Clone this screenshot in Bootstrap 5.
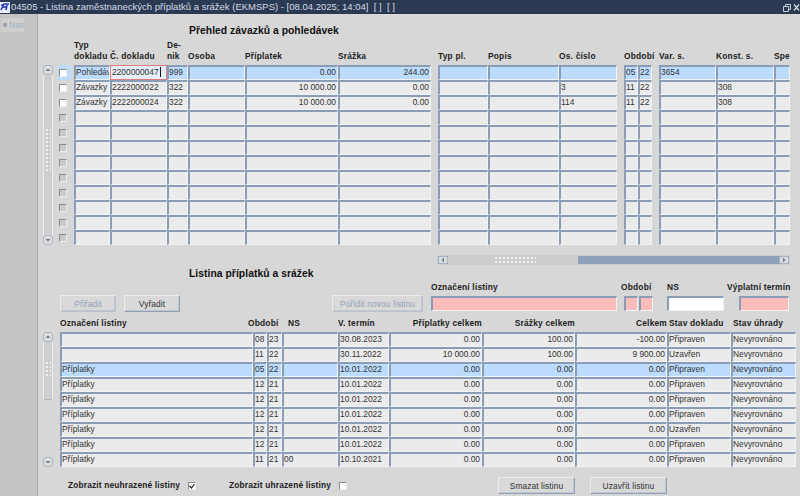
<!DOCTYPE html>
<html lang="cs">
<head>
<meta charset="utf-8">
<title>Listina příplatků a srážek</title>
<link href="https://cdn.jsdelivr.net/npm/bootstrap@5.3.0/dist/css/bootstrap.min.css" rel="stylesheet">
<style>
html,body{width:800px;height:496px;overflow:hidden;margin:0;background:#d7d7d7}
body{font-family:"Liberation Sans",Arial,sans-serif;font-size:8.4px;color:#222}
.ttl{height:14px;background:#2a3a52;color:#d5dbe4;font-size:9.5px;line-height:14px;white-space:pre}
.ttl svg{flex:none}
.ttlt{margin-left:1px}
.side{width:38px;height:482px;background:#c5c5c5;border-right:1px solid #a9aeb5;padding-top:4px}
.navb{width:23px;height:14px;margin-left:1px;background:#cfcfcf;color:#9dafc5;font-size:8.4px;line-height:14px;padding-left:1px;gap:1px}
.work{width:762px;height:482px;padding:10px 0 0 5px;background:#d7d7d7}
.h1a{font-size:10.3px;font-weight:700;line-height:14px;color:#111;margin-left:146px;letter-spacing:.06px}
.h1b{margin-top:2px}
.trow,.brow{display:grid;height:15px}
.trow{grid-template-columns:16px 36px 57px 21px 57px 93px 93px 57px 71px 58px 21px 14px 64px 58px 16px}
.brow{grid-template-columns:193px 14px 15px 56px 51px 93px 93px 92px 64px 65px}
.trow>:nth-child(8),.trow>:nth-child(11),.trow>:nth-child(13){margin-left:7px}
.hdr{height:25px;padding-bottom:3px;align-items:end;font-weight:700;line-height:11px;letter-spacing:.2px;color:#222}
.hdr>span{white-space:nowrap}
.htop{margin:2px 0 0 15px}
.hbot{height:15px;padding-bottom:3px;margin:5px 0 0 17px}
.hbot>.ob{margin-left:-5px}
.hbot>.pad6{padding-left:6px}
.hbot>.pad2{padding-left:2px}
.fld{display:block;height:15px;background:#ebebeb;border-style:solid;border-width:2px 1px 1px 2px;border-color:#8a9cb6 #f3f3f3 #f3f3f3 #8a9cb6;padding:0 1px 0 0;line-height:11px;white-space:nowrap;overflow:hidden;color:#333}
.sel{background:#bcdcfd}
.foc{background:#e6eff8;border:1px solid #e27b7b;line-height:13px;padding-left:1px}
.caret{display:inline-block;width:1px;height:10px;background:#111;vertical-align:-2px;margin-left:1px}
.pink{background:#fdbcbc}
.wh{background:#fff}
.chk{display:flex;align-items:center;padding-left:1px}
.chk.sel2{background:linear-gradient(90deg,#bcdcfd 13px,transparent 13px)}
.cb{display:block;width:8px;height:8px;background:#c9c9c9;border:1px solid;border-color:#8c8c8c #eee #eee #8c8c8c}
.cb.on{background:#fff}
.vs{width:10px;flex:none;margin-right:5px}
.vs1{height:180px}
.vs2{height:135px;margin-right:7px}
.sb{display:block;width:10px;height:10px;border:1px solid #aab5c4;border-radius:3px;background:#dcdcdc}
.sb svg{display:block}
.trk{display:block;background-color:#cfcfcf;border-left:1px solid #ececec;border-right:1px solid #ececec}
.t2{height:58px;border-bottom:1px solid #aab5c4;border-radius:0 0 2px 2px}
.dots{display:block;height:16px;margin:19px 1px 0;background-image:radial-gradient(circle,#f2f2f2 .7px,transparent 1px);background-size:4px 4px}
.dots1{height:44px;margin-top:53px}
.hs{height:10px;width:353px;margin:10px 0 0 394px;background:#8ea1ba;border:1px solid #c9ced6;display:flex}
.hs b{display:block;flex:none}
.hsb{width:10px;background:#dcdcdc;border:1px solid #aab5c4;border-radius:2px}
.hst{width:130px;background-color:#cdcdcd}
.hst i{display:block;height:8px;width:42px;margin-left:46px;background-image:radial-gradient(circle,#f2f2f2 .7px,transparent 1px);background-size:4px 4px}
.hsm{flex:1 1 auto}
.fgrid{display:grid;grid-template-columns:56px 8px 56px 152px 91px 8px 186px 7px 14px 1px 14px 14px 57px 15px 50px;grid-template-rows:14px 17px;margin-left:17px;height:31px}
.fl{font-weight:700;letter-spacing:.2px;line-height:12px;white-space:nowrap;color:#222}
.flob{margin-left:-3px;grid-column:span 3}
.flvt{margin-left:-12px}
.fgrid .fld{margin-top:1px}
.bt{--bs-btn-padding-y:0;--bs-btn-padding-x:0;--bs-btn-font-size:8.4px;--bs-btn-border-radius:1px;--bs-btn-line-height:14px;--bs-btn-color:#333;--bs-btn-bg:#d9d9d9;--bs-btn-border-width:0;--bs-btn-hover-bg:#d9d9d9;height:17px;display:block;background:#d9d9d9;color:#333;border:1px solid;border-color:#ececec #8fa0b6 #8fa0b6 #ececec;box-shadow:inset -1px -1px 0 #c2c7cf;letter-spacing:.1px}
.bt:disabled{color:#93a2b6;opacity:1;background:#d9d9d9;border-color:#ececec #b9c1cd #b9c1cd #ececec}
.foot{height:17px;margin-top:10px;font-weight:700;letter-spacing:.15px;color:#222;margin-left:25px}
.foot .bt{font-weight:400;width:77px}
.s1{margin-left:8px}
.z2{margin-left:33px}
.bsm{margin-left:151px}
.buz{margin-left:15px}
.ck{display:block;width:8px;height:8px;background:#fff;border:1px solid;border-color:#8c8c8c #eee #eee #8c8c8c}
</style>
</head>
<body>
<div class="ttl d-flex align-items-center">
  <svg width="10" height="11" viewBox="0 0 10 11"><rect width="10" height="11" fill="#e8eefc"/><path d="M1 8 4 2h5M3 5h4M1 3h2M6 8l1-5" stroke="#2338b8" stroke-width="1.6" fill="none"/></svg>
  <span class="ttlt flex-grow-1">04505 - Listina zaměstnaneckých příplatků a srážek (EKMSPS) - [08.04.2025; 14:04]  [ ]  [ ]</span>
  <svg width="17" height="9" viewBox="0 0 17 9"><path d="M.5 3.500h5v5h-5zM2.500 3V1.500h5v5H6" stroke="#c8d0da" fill="none"/><path d="M11 1.500l5 6M16 1.500l-5 6" stroke="#d9dfe7" stroke-width="1.200"/></svg>
</div>
<div class="d-flex">
  <div class="side">
    <div class="navb d-flex align-items-center"><svg width="7" height="8" viewBox="0 0 7 8"><circle cx="3.500" cy="4" r="2.500" fill="#9aa2ac"/></svg>Nav</div>
  </div>
  <div class="work">
    <div class="h1a">Přehled závazků a pohledávek</div>
    <div class="trow hdr htop">
      <span></span><span>Typ<br>dokladu</span><span>Č. dokladu</span><span>De-<br>nik</span><span>Osoba</span><span>Příplatek</span><span>Srážka</span><span>Typ pl.</span><span>Popis</span><span>Os. číslo</span><span>Období</span><span></span><span>Var. s.</span><span>Konst. s.</span><span>Spe</span>
    </div>
    <div class="d-flex">
      <div class="vs vs1 d-flex flex-column">
        <span class="sb"><svg width="8" height="8" viewBox="0 0 8 8"><path d="M1.500 5h5L4 2.500z" fill="#6d7c90"/></svg></span>
        <span class="trk flex-grow-1"><span class="dots dots1"></span></span>
        <span class="sb"><svg width="8" height="8" viewBox="0 0 8 8"><path d="M1.500 3h5L4 5.500z" fill="#6d7c90"/></svg></span>
      </div>
      <div>
        <div class="trow"><span class="chk sel2"><span class="cb on"></span></span><span class="fld sel">Pohledávky</span><span class="fld foc">2200000047<span class="caret"></span></span><span class="fld sel">999</span><span class="fld sel"></span><span class="fld sel text-end">0.00</span><span class="fld sel text-end">244.00</span><span class="fld sel"></span><span class="fld sel"></span><span class="fld sel"></span><span class="fld sel">05</span><span class="fld sel">22</span><span class="fld sel">3654</span><span class="fld sel"></span><span class="fld sel"></span></div>
        <div class="trow"><span class="chk"><span class="cb on"></span></span><span class="fld">Závazky</span><span class="fld">2222000022</span><span class="fld">322</span><span class="fld"></span><span class="fld text-end">10 000.00</span><span class="fld text-end">0.00</span><span class="fld"></span><span class="fld"></span><span class="fld">3</span><span class="fld">11</span><span class="fld">22</span><span class="fld"></span><span class="fld">308</span><span class="fld"></span></div>
        <div class="trow"><span class="chk"><span class="cb on"></span></span><span class="fld">Závazky</span><span class="fld">2222000024</span><span class="fld">322</span><span class="fld"></span><span class="fld text-end">10 000.00</span><span class="fld text-end">0.00</span><span class="fld"></span><span class="fld"></span><span class="fld">114</span><span class="fld">11</span><span class="fld">22</span><span class="fld"></span><span class="fld">308</span><span class="fld"></span></div>
        <div class="trow"><span class="chk"><span class="cb"></span></span><span class="fld"></span><span class="fld"></span><span class="fld"></span><span class="fld"></span><span class="fld"></span><span class="fld"></span><span class="fld"></span><span class="fld"></span><span class="fld"></span><span class="fld"></span><span class="fld"></span><span class="fld"></span><span class="fld"></span><span class="fld"></span></div>
        <div class="trow"><span class="chk"><span class="cb"></span></span><span class="fld"></span><span class="fld"></span><span class="fld"></span><span class="fld"></span><span class="fld"></span><span class="fld"></span><span class="fld"></span><span class="fld"></span><span class="fld"></span><span class="fld"></span><span class="fld"></span><span class="fld"></span><span class="fld"></span><span class="fld"></span></div>
        <div class="trow"><span class="chk"><span class="cb"></span></span><span class="fld"></span><span class="fld"></span><span class="fld"></span><span class="fld"></span><span class="fld"></span><span class="fld"></span><span class="fld"></span><span class="fld"></span><span class="fld"></span><span class="fld"></span><span class="fld"></span><span class="fld"></span><span class="fld"></span><span class="fld"></span></div>
        <div class="trow"><span class="chk"><span class="cb"></span></span><span class="fld"></span><span class="fld"></span><span class="fld"></span><span class="fld"></span><span class="fld"></span><span class="fld"></span><span class="fld"></span><span class="fld"></span><span class="fld"></span><span class="fld"></span><span class="fld"></span><span class="fld"></span><span class="fld"></span><span class="fld"></span></div>
        <div class="trow"><span class="chk"><span class="cb"></span></span><span class="fld"></span><span class="fld"></span><span class="fld"></span><span class="fld"></span><span class="fld"></span><span class="fld"></span><span class="fld"></span><span class="fld"></span><span class="fld"></span><span class="fld"></span><span class="fld"></span><span class="fld"></span><span class="fld"></span><span class="fld"></span></div>
        <div class="trow"><span class="chk"><span class="cb"></span></span><span class="fld"></span><span class="fld"></span><span class="fld"></span><span class="fld"></span><span class="fld"></span><span class="fld"></span><span class="fld"></span><span class="fld"></span><span class="fld"></span><span class="fld"></span><span class="fld"></span><span class="fld"></span><span class="fld"></span><span class="fld"></span></div>
        <div class="trow"><span class="chk"><span class="cb"></span></span><span class="fld"></span><span class="fld"></span><span class="fld"></span><span class="fld"></span><span class="fld"></span><span class="fld"></span><span class="fld"></span><span class="fld"></span><span class="fld"></span><span class="fld"></span><span class="fld"></span><span class="fld"></span><span class="fld"></span><span class="fld"></span></div>
        <div class="trow"><span class="chk"><span class="cb"></span></span><span class="fld"></span><span class="fld"></span><span class="fld"></span><span class="fld"></span><span class="fld"></span><span class="fld"></span><span class="fld"></span><span class="fld"></span><span class="fld"></span><span class="fld"></span><span class="fld"></span><span class="fld"></span><span class="fld"></span><span class="fld"></span></div>
        <div class="trow"><span class="chk"><span class="cb"></span></span><span class="fld"></span><span class="fld"></span><span class="fld"></span><span class="fld"></span><span class="fld"></span><span class="fld"></span><span class="fld"></span><span class="fld"></span><span class="fld"></span><span class="fld"></span><span class="fld"></span><span class="fld"></span><span class="fld"></span><span class="fld"></span></div>
      </div>
    </div>
    <div class="hs">
      <b class="hsb d-flex align-items-center justify-content-center"><svg width="6" height="6" viewBox="0 0 6 6"><path d="M4 .5v5L1.500 3z" fill="#6d7c90"/></svg></b>
      <b class="hst"><i></i></b>
      <span class="hsm"></span>
      <b class="hsb d-flex align-items-center justify-content-center"><svg width="6" height="6" viewBox="0 0 6 6"><path d="M2 .5v5L4.500 3z" fill="#6d7c90"/></svg></b>
    </div>
    <div class="h1a h1b">Listina příplatků a srážek</div>
    <div class="fgrid">
      <span></span><span></span><span></span><span></span><span></span><span></span>
      <span class="fl">Označení listiny</span><span></span>
      <span class="fl flob">Období</span><span></span>
      <span class="fl">NS</span><span></span>
      <span class="fl text-end flvt">Výplatní termín</span>
      <button class="btn bt" disabled>Přiřadit</button><span></span><button class="btn bt">Vyřadit</button><span></span><button class="btn bt" disabled>Pořídit novou listinu</button><span></span>
      <span class="fld pink"></span><span></span><span class="fld pink"></span><span></span><span class="fld pink"></span><span></span><span class="fld wh"></span><span></span><span class="fld pink"></span>
    </div>
    <div class="brow hdr hbot">
      <span>Označení listiny</span><span class="ob">Období</span><span></span><span class="pad6">NS</span><span>V. termín</span><span class="text-end">Příplatky celkem</span><span class="text-end">Srážky celkem</span><span class="text-end">Celkem</span><span class="pad2">Stav dokladu</span><span class="pad2">Stav úhrady</span>
    </div>
    <div class="d-flex">
      <div class="vs vs2 d-flex flex-column">
        <span class="sb"><svg width="8" height="8" viewBox="0 0 8 8"><path d="M1.500 5h5L4 2.500z" fill="#6d7c90"/></svg></span>
        <span class="trk t2"><span class="dots"></span></span>
        <span class="flex-grow-1"></span>
        <span class="sb"><svg width="8" height="8" viewBox="0 0 8 8"><path d="M1.500 3h5L4 5.500z" fill="#6d7c90"/></svg></span>
      </div>
      <div>
        <div class="brow"><span class="fld"></span><span class="fld">08</span><span class="fld">23</span><span class="fld"></span><span class="fld">30.08.2023</span><span class="fld text-end">0.00</span><span class="fld text-end">100.00</span><span class="fld text-end">-100.00</span><span class="fld">Připraven</span><span class="fld">Nevyrovnáno</span></div>
        <div class="brow"><span class="fld"></span><span class="fld">11</span><span class="fld">22</span><span class="fld"></span><span class="fld">30.11.2022</span><span class="fld text-end">10 000.00</span><span class="fld text-end">100.00</span><span class="fld text-end">9 900.00</span><span class="fld">Uzavřen</span><span class="fld">Nevyrovnáno</span></div>
        <div class="brow"><span class="fld sel">Příplatky</span><span class="fld sel">05</span><span class="fld sel">22</span><span class="fld sel"></span><span class="fld sel">10.01.2022</span><span class="fld sel text-end">0.00</span><span class="fld sel text-end">0.00</span><span class="fld sel text-end">0.00</span><span class="fld sel">Připraven</span><span class="fld sel">Nevyrovnáno</span></div>
        <div class="brow"><span class="fld">Příplatky</span><span class="fld">12</span><span class="fld">21</span><span class="fld"></span><span class="fld">10.01.2022</span><span class="fld text-end">0.00</span><span class="fld text-end">0.00</span><span class="fld text-end">0.00</span><span class="fld">Připraven</span><span class="fld">Nevyrovnáno</span></div>
        <div class="brow"><span class="fld">Příplatky</span><span class="fld">12</span><span class="fld">21</span><span class="fld"></span><span class="fld">10.01.2022</span><span class="fld text-end">0.00</span><span class="fld text-end">0.00</span><span class="fld text-end">0.00</span><span class="fld">Připraven</span><span class="fld">Nevyrovnáno</span></div>
        <div class="brow"><span class="fld">Příplatky</span><span class="fld">12</span><span class="fld">21</span><span class="fld"></span><span class="fld">10.01.2022</span><span class="fld text-end">0.00</span><span class="fld text-end">0.00</span><span class="fld text-end">0.00</span><span class="fld">Připraven</span><span class="fld">Nevyrovnáno</span></div>
        <div class="brow"><span class="fld">Příplatky</span><span class="fld">12</span><span class="fld">21</span><span class="fld"></span><span class="fld">10.01.2022</span><span class="fld text-end">0.00</span><span class="fld text-end">0.00</span><span class="fld text-end">0.00</span><span class="fld">Uzavřen</span><span class="fld">Nevyrovnáno</span></div>
        <div class="brow"><span class="fld">Příplatky</span><span class="fld">12</span><span class="fld">21</span><span class="fld"></span><span class="fld">10.01.2022</span><span class="fld text-end">0.00</span><span class="fld text-end">0.00</span><span class="fld text-end">0.00</span><span class="fld">Připraven</span><span class="fld">Nevyrovnáno</span></div>
        <div class="brow"><span class="fld">Příplatky</span><span class="fld">11</span><span class="fld">21</span><span class="fld">00</span><span class="fld">10.10.2021</span><span class="fld text-end">0.00</span><span class="fld text-end">0.00</span><span class="fld text-end">0.00</span><span class="fld">Připraven</span><span class="fld">Nevyrovnáno</span></div>
      </div>
    </div>
    <div class="foot d-flex align-items-center">
      <span>Zobrazit neuhrazené listiny</span>
      <span class="ck s1"><svg width="6" height="6" viewBox="0 0 6 6" class="d-block"><path d="M.5 3l2 2L5.500 1" stroke="#222" stroke-width="1.200" fill="none"/></svg></span>
      <span class="z2">Zobrazit uhrazené listiny</span>
      <span class="ck s1"></span>
      <button class="btn bt bsm">Smazat listinu</button>
      <button class="btn bt buz">Uzavřít listinu</button>
    </div>
  </div>
</div>
<script src="https://cdn.jsdelivr.net/npm/bootstrap@5.3.0/dist/js/bootstrap.bundle.min.js"></script>
</body>
</html>
